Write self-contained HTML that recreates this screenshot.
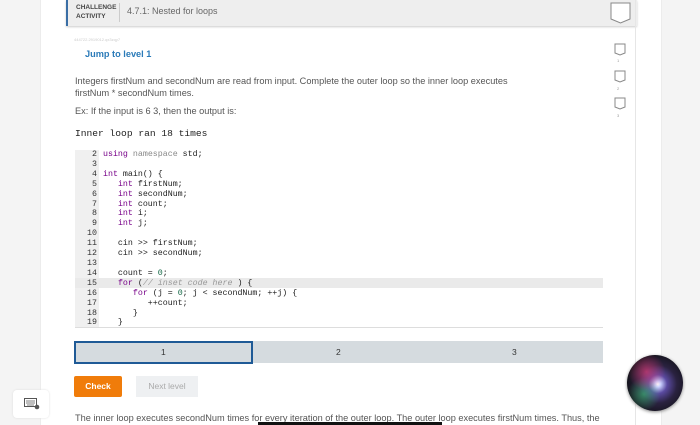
<!DOCTYPE html>
<html><head><style>
body{margin:0;width:700px;height:425px;overflow:hidden;background:#f4f4f4;font-family:"Liberation Sans",sans-serif;position:relative}
.a{position:absolute}
.mono{font-family:"Liberation Mono",monospace}
</style></head><body>
<div class="a" style="left:40px;top:0;width:620px;height:425px;background:#fff;border-left:1px solid #ececec;border-right:1px solid #ececec"></div>
<div class="a" style="left:66px;top:0;width:569px;height:26px;background:#eeeeee;border-left:2px solid #3a6ea5;box-shadow:0 1px 2px #ccc"></div>
<div class="a" style="left:76px;top:3px;font-size:6.5px;font-weight:bold;color:#444;line-height:9px">CHALLENGE<br>ACTIVITY</div>
<div class="a" style="left:119px;top:3px;width:1px;height:19px;background:#ccc"></div>
<div class="a" style="left:127px;top:6px;font-size:9px;color:#666">4.7.1: Nested for loops</div>
<div class="a" style="left:635px;top:0;width:1px;height:425px;background:#e6e6e6"></div>
<svg class="a" style="left:610px;top:2px" width="22" height="22"><path d="M1 1H20V17L10.5 21L1 17Z" fill="#fff" stroke="#888"/></svg>
<svg class="a" style="left:614px;top:43px" width="13" height="13"><path d="M1 1H11V10L6 12L1 10Z" fill="#fff" stroke="#888"/></svg>
<svg class="a" style="left:614px;top:70px" width="13" height="13"><path d="M1 1H11V10L6 12L1 10Z" fill="#fff" stroke="#888"/></svg>
<svg class="a" style="left:614px;top:97px" width="13" height="13"><path d="M1 1H11V10L6 12L1 10Z" fill="#fff" stroke="#888"/></svg>
<div class="a" style="left:617px;top:58px;font-size:4px;color:#999">1</div>
<div class="a" style="left:617px;top:86px;font-size:4px;color:#999">2</div>
<div class="a" style="left:617px;top:113px;font-size:4px;color:#999">3</div>
<div class="a" style="left:74px;top:37px;font-size:4px;color:#ccc">444722.2919012.qx3zqy7</div>
<div class="a" style="left:85px;top:49px;font-size:9.2px;font-weight:bold;color:#2a7ab8">Jump to level 1</div>
<div class="a" style="left:75px;top:75px;font-size:9.2px;color:#555;line-height:12px;white-space:nowrap">Integers firstNum and secondNum are read from input. Complete the outer loop so the inner loop executes<br>firstNum * secondNum times.</div>
<div class="a" style="left:75px;top:106px;font-size:9.2px;color:#555">Ex: If the input is 6 3, then the output is:</div>
<div class="a mono" style="left:75px;top:128px;font-size:9.6px;color:#222">Inner loop ran 18 times</div>
<div class="a" style="left:75px;top:150px;width:528px;height:177px;background:#fff;border-bottom:1px solid #ddd"></div>
<div class="a" style="left:75px;top:150px;width:24px;height:177px;background:#f0f0f0"></div>
<div class="a" style="left:75px;top:278px;width:528px;height:10px;background:#eaeaea"></div>
<pre class="a mono" style="left:75px;top:150px;margin:0;font-size:8.3px;line-height:9.9px;color:#333;width:22px;text-align:right">2
3
4
5
6
7
8
9
10
11
12
13
14
15
16
17
18
19</pre>
<pre class="a mono" style="left:103px;top:150px;margin:0;font-size:8.3px;line-height:9.9px;color:#222"><span style="color:#708">using</span> <span style="color:#888">namespace</span> std;

<span style="color:#708">int</span> main() {
   <span style="color:#708">int</span> firstNum;
   <span style="color:#708">int</span> secondNum;
   <span style="color:#708">int</span> count;
   <span style="color:#708">int</span> i;
   <span style="color:#708">int</span> j;

   cin &gt;&gt; firstNum;
   cin &gt;&gt; secondNum;

   count = <span style="color:#164">0</span>;
   <span style="color:#708">for</span> (<i style="color:#999">// inset code here </i>) {
      <span style="color:#708">for</span> (j = <span style="color:#164">0</span>; j &lt; secondNum; ++j) {
         ++count;
      }
   }</pre>
<div class="a" style="left:74px;top:341px;width:529px;height:22px;background:#d5dbdf"></div>
<div class="a" style="left:74px;top:341px;width:175px;height:19px;border:2px solid #1f5a96;background:#d5dbdf"></div>
<div class="a" style="left:161px;top:347px;font-size:8.5px;color:#333">1</div>
<div class="a" style="left:336px;top:347px;font-size:8.5px;color:#333">2</div>
<div class="a" style="left:512px;top:347px;font-size:8.5px;color:#333">3</div>
<div class="a" style="left:74px;top:376px;width:48px;height:21px;background:#f07c0a;color:#fff;font-size:8.5px;font-weight:bold;text-align:center;line-height:21px;border-radius:2px">Check</div>
<div class="a" style="left:136px;top:376px;width:62px;height:21px;background:#eef0f2;color:#aaa;font-size:8.5px;text-align:center;line-height:21px">Next level</div>
<div class="a" style="left:75px;top:413px;font-size:9.2px;color:#555;white-space:nowrap">The inner loop executes secondNum times for every iteration of the outer loop. The outer loop executes firstNum times. Thus, the</div>
<div class="a" style="left:258px;top:422px;width:184px;height:3px;background:#111"></div>
<div class="a" style="left:13px;top:390px;width:36px;height:28px;background:#fff;border-radius:4px;box-shadow:0 0 2px #ddd"></div>
<svg class="a" style="left:24px;top:398px" width="16" height="12"><rect x="0.5" y="0.5" width="12" height="8" fill="#fff" stroke="#555"/><path d="M2 3h9M2 5h9M3 7h7" stroke="#555" stroke-width="0.8"/><circle cx="13" cy="9" r="2.3" fill="#555"/></svg>
<div class="a" style="left:627px;top:355px;width:56px;height:56px;border-radius:50%;background:radial-gradient(circle at 35% 30%,rgba(220,60,120,.7) 0,transparent 35%),radial-gradient(circle at 30% 70%,rgba(60,200,120,.6) 0,transparent 30%),radial-gradient(circle at 55% 52%,#fff 0,#c9d0ff 7%,#5a4aa0 22%,#2a2240 45%,#121218 75%);box-shadow:0 1px 3px #888"></div>
</body></html>
